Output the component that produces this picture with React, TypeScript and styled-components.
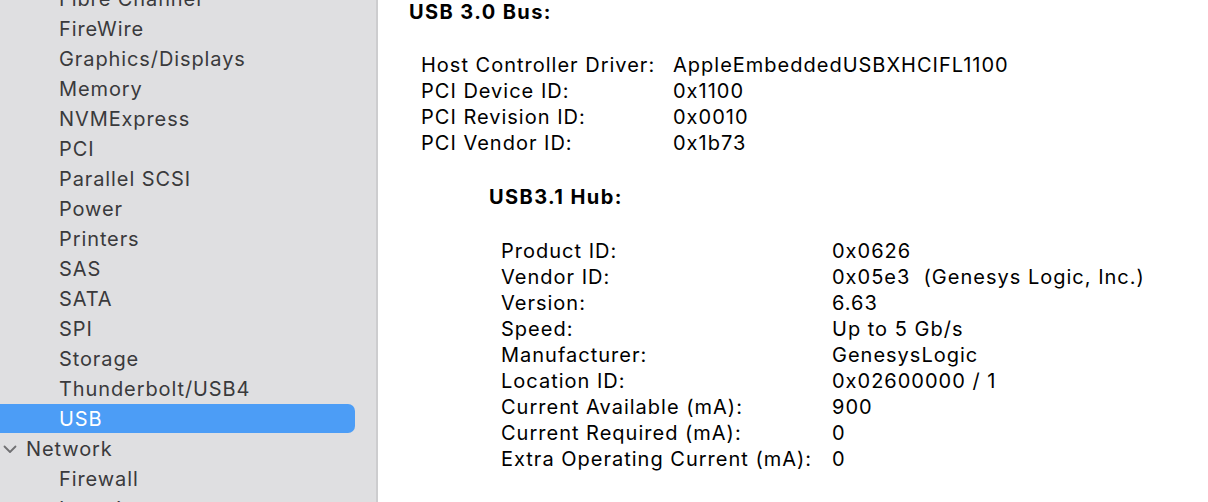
import React from 'react';
import styled, { createGlobalStyle } from 'styled-components';

const GlobalStyle = createGlobalStyle`
  html, body {
    margin: 0;
    padding: 0;
    height: 100%;
    overflow: hidden;
    background: #ffffff;
  }
  #root {
    height: 100%;
  }
`;

const Window = styled.div`
  display: flex;
  height: 502px;
  width: 1208px;
  overflow: hidden;
  font-family: Inter, "Liberation Sans", sans-serif;
  font-size: 20px;
  letter-spacing: 1px;
`;

const Sidebar = styled.nav`
  width: 376px;
  flex-shrink: 0;
  background: #dfdfe1;
  border-right: 2px solid #cdcdcf;
  overflow: hidden;
  letter-spacing: 0.9px;
`;

const SideList = styled.ul`
  list-style: none;
  margin: -16px 0 0;
  padding: 0;
`;

const SideItem = styled.li<{ $selected?: boolean; $group?: boolean }>`
  height: 30px;
  display: flex;
  align-items: center;
  padding-left: ${p => (p.$group ? '0' : '59px')};
  color: ${p => (p.$selected ? '#ffffff' : '#3a3a3c')};
  position: relative;
  z-index: 0;

  &::before {
    content: '';
    display: ${p => (p.$selected ? 'block' : 'none')};
    position: absolute;
    left: -8px;
    right: 21px;
    top: 0;
    bottom: 1px;
    border-radius: 7px;
    background: #4c9df6;
    z-index: -1;
  }
`;

const Chevron = styled.svg`
  width: 16px;
  height: 16px;
  margin: 0 8px 0 2px;
  flex-shrink: 0;
`;

const Content = styled.main`
  flex: 1;
  padding: 0 0 0 31px;
  color: #000000;
`;

const Heading = styled.h2<{ $indent?: number }>`
  margin: 0;
  height: 26px;
  line-height: 26px;
  font-size: 20px;
  font-weight: 700;
  letter-spacing: 1.4px;
  padding-left: ${p => p.$indent ?? 0}px;
  margin-top: ${p => (p.$indent ? '28px' : '-1px')};
`;

const Table = styled.dl<{ $indent: number; $labelWidth: number; $gap: number }>`
  display: grid;
  grid-template-columns: ${p => p.$labelWidth}px auto;
  grid-auto-rows: 26px;
  align-items: center;
  margin: ${p => p.$gap}px 0 0;
  padding-left: ${p => p.$indent}px;
  white-space: pre;

  dt,
  dd {
    margin: 0;
    line-height: 26px;
  }
`;

const sideItems = [
  'Fibre Channel',
  'FireWire',
  'Graphics/Displays',
  'Memory',
  'NVMExpress',
  'PCI',
  'Parallel SCSI',
  'Power',
  'Printers',
  'SAS',
  'SATA',
  'SPI',
  'Storage',
  'Thunderbolt/USB4',
  'USB',
];

const busRows: [string, string][] = [
  ['Host Controller Driver:', 'AppleEmbeddedUSBXHCIFL1100'],
  ['PCI Device ID:', '0x1100'],
  ['PCI Revision ID:', '0x0010'],
  ['PCI Vendor ID:', '0x1b73'],
];

const hubRows: [string, string][] = [
  ['Product ID:', '0x0626'],
  ['Vendor ID:', '0x05e3  (Genesys Logic, Inc.)'],
  ['Version:', '6.63'],
  ['Speed:', 'Up to 5 Gb/s'],
  ['Manufacturer:', 'GenesysLogic'],
  ['Location ID:', '0x02600000 / 1'],
  ['Current Available (mA):', '900'],
  ['Current Required (mA):', '0'],
  ['Extra Operating Current (mA):', '0'],
];

const App: React.FC = () => {
  return (
    <Window>
      <GlobalStyle />
      <Sidebar>
        <SideList>
          {sideItems.map(item => (
            <SideItem key={item} $selected={item === 'USB'}>
              {item}
            </SideItem>
          ))}
          <SideItem $group>
            <Chevron viewBox="0 0 16 16">
              <path d="M2.5 5.5 L8 11 L13.5 5.5" fill="none" stroke="#707072" strokeWidth="1.8" strokeLinecap="round" strokeLinejoin="round" />
            </Chevron>
            Network
          </SideItem>
          <SideItem>Firewall</SideItem>
          <SideItem>Locations</SideItem>
        </SideList>
      </Sidebar>
      <Content>
        <Heading>USB 3.0 Bus:</Heading>
        <Table $indent={12} $labelWidth={252} $gap={27}>
          {busRows.map(([k, v]) => (
            <React.Fragment key={k}>
              <dt>{k}</dt>
              <dd>{v}</dd>
            </React.Fragment>
          ))}
        </Table>
        <Heading $indent={80}>USB3.1 Hub:</Heading>
        <Table $indent={92} $labelWidth={331} $gap={28}>
          {hubRows.map(([k, v]) => (
            <React.Fragment key={k}>
              <dt>{k}</dt>
              <dd>{v}</dd>
            </React.Fragment>
          ))}
        </Table>
      </Content>
    </Window>
  );
};

export default App;
